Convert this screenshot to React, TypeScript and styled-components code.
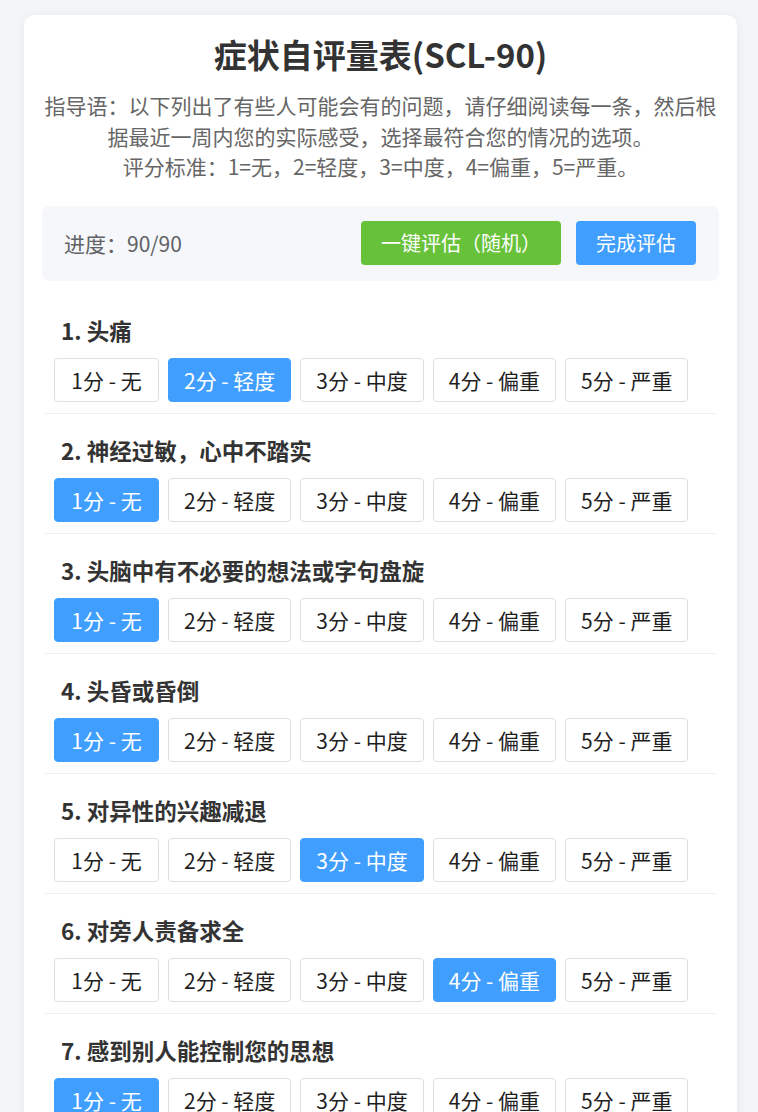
import React, { useState } from 'react';
import styled, { createGlobalStyle } from 'styled-components';

const GlobalStyle = createGlobalStyle`
  html, body {
    margin: 0;
    padding: 0;
    background: #f3f5f8;
    font-family: "Noto Sans CJK SC", "Noto Sans", sans-serif;
  }
  * { box-sizing: border-box; }
`;

const Page = styled.div`
  padding: 15px 21px 40px 24px;
`;

const Card = styled.div`
  background: #ffffff;
  border-radius: 10px;
  box-shadow: 0 2px 12px rgba(0, 0, 0, 0.06);
  padding: 19px 18px 20px;
`;

const Title = styled.h1`
  margin: 0 0 16px;
  text-align: center;
  font-size: 33px;
  line-height: 40px;
  font-weight: 700;
  color: #333;
`;

const Intro = styled.p`
  margin: 0;
  text-align: center;
  font-size: 21px;
  line-height: 30.5px;
  color: #666;
`;

const ProgressBar = styled.div`
  margin-top: 24px;
  margin-bottom: 13px;
  background: #f5f7fa;
  border-radius: 8px;
  padding: 15px 23px 16px 22px;
  display: flex;
  align-items: center;
  justify-content: space-between;
`;

const ProgressText = styled.span`
  font-size: 21px;
  color: #606266;
`;

const Actions = styled.div`
  display: flex;
  gap: 15px;
`;

const ActionButton = styled.button<{ $tone: 'green' | 'blue' }>`
  height: 44px;
  padding: 0 20px;
  border: none;
  border-radius: 4px;
  font-family: inherit;
  font-size: 20px;
  color: #fff;
  background: ${(p) => (p.$tone === 'green' ? '#67c23a' : '#409eff')};
  cursor: pointer;
`;

const Question = styled.div`
  margin: 0 3px;
  padding: 21px 9px 11px;
  border-bottom: 1px solid #ebeef5;
`;

const QuestionTitle = styled.div`
  padding-left: 7px;
  margin-bottom: 13px;
  font-size: 22.5px;
  line-height: 30px;
  font-weight: 700;
  color: #333;
`;

const Options = styled.div`
  display: flex;
  gap: 9px;
`;

const Option = styled.button<{ $active: boolean }>`
  height: 44px;
  min-width: 105px;
  padding: 0 15px;
  border-radius: 4px;
  font-family: inherit;
  font-size: 21px;
  border: 1px solid ${(p) => (p.$active ? '#409eff' : '#dcdfe6')};
  background: ${(p) => (p.$active ? '#409eff' : '#fff')};
  color: ${(p) => (p.$active ? '#fff' : '#1f1f1f')};
  cursor: pointer;
`;

const labels = ['无', '轻度', '中度', '偏重', '严重'];

const questions = [
  '头痛',
  '神经过敏，心中不踏实',
  '头脑中有不必要的想法或字句盘旋',
  '头昏或昏倒',
  '对异性的兴趣减退',
  '对旁人责备求全',
  '感到别人能控制您的思想',
  '责怪别人制造麻烦',
  '忘记性大',
  '担心自己的衣饰整齐及仪态的端正',
];

const initial = [2, 1, 1, 1, 3, 4, 1, 2, 3, 1];

export default function App() {
  const [answers, setAnswers] = useState<number[]>(initial);

  const pick = (qi: number, score: number) => {
    setAnswers((prev) => prev.map((v, i) => (i === qi ? score : v)));
  };

  const randomize = () => {
    setAnswers((prev) => prev.map(() => Math.floor(Math.random() * 5) + 1));
  };

  return (
    <>
      <GlobalStyle />
      <Page>
        <Card>
          <Title>症状自评量表(SCL-90)</Title>
          <Intro>
            指导语：以下列出了有些人可能会有的问题，请仔细阅读每一条，然后根据最近一周内您的实际感受，选择最符合您的情况的选项。
            <br />
            评分标准：1=无，2=轻度，3=中度，4=偏重，5=严重。
          </Intro>

          <ProgressBar>
            <ProgressText>进度：90/90</ProgressText>
            <Actions>
              <ActionButton $tone="green" onClick={randomize}>
                一键评估（随机）
              </ActionButton>
              <ActionButton $tone="blue">完成评估</ActionButton>
            </Actions>
          </ProgressBar>

          {questions.map((q, qi) => (
            <Question key={qi}>
              <QuestionTitle>
                {qi + 1}. {q}
              </QuestionTitle>
              <Options>
                {labels.map((label, li) => (
                  <Option
                    key={li}
                    $active={answers[qi] === li + 1}
                    onClick={() => pick(qi, li + 1)}
                  >
                    {li + 1}分 - {label}
                  </Option>
                ))}
              </Options>
            </Question>
          ))}
        </Card>
      </Page>
    </>
  );
}
